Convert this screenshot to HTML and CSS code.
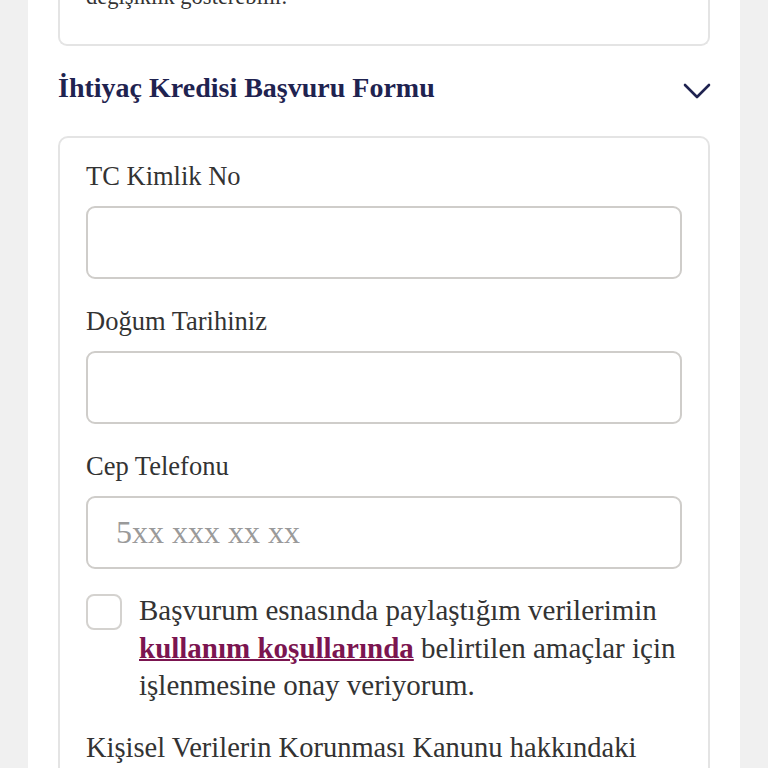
FILE: index.html
```html
<!DOCTYPE html>
<html lang="tr">
<head>
  <meta charset="UTF-8">
  <meta name="viewport" content="width=device-width, initial-scale=1.0">
  <title>İhtiyaç Kredisi Başvuru Formu</title>
  <link rel="stylesheet" href="styles.css">
</head>
<body>
  <div class="page">

    <div class="info-card">
      <p>Faiz oranları ve masraflar başvuru sonucuna göre<br>değişiklik gösterebilir.</p>
    </div>

    <!-- Accordion header -->
    <div class="accordion-head">
      <h2>İhtiyaç Kredisi Başvuru Formu</h2>
      <svg class="chevron" width="28" height="16" viewBox="0 0 28 16">
        <path d="M2 2 L14 14 L26 2" fill="none" stroke="#1f2350" stroke-width="2.6" stroke-linecap="round" stroke-linejoin="round"/>
      </svg>
    </div>

    <form class="form-card">
      <label for="tc">TC Kimlik No</label>
      <input type="text" id="tc">

      <label for="birth">Doğum Tarihiniz</label>
      <input type="text" id="birth">

      <label for="phone">Cep Telefonu</label>
      <input type="text" id="phone" placeholder="5xx xxx xx xx">

      <div class="consent">
        <span class="checkbox"></span>
        <p>Başvurum esnasında paylaştığım verilerimin <a href="#">kullanım koşullarında</a> belirtilen amaçlar için işlenmesine onay veriyorum.</p>
      </div>

      <p class="kvkk">Kişisel Verilerin Korunması Kanunu hakkındaki bilgilendirme metnini okudum.</p>
    </form>

  </div>
</body>
</html>
```

FILE: styles.css
```css
body {
  margin: 0;
  background-color: #f0f0f0;
  font-family: "Liberation Serif", "DejaVu Serif", serif;
  color: #333;
  height: 768px;
  overflow: hidden;
}

.page {
  margin: 0 28px;
  padding: 0 30px;
  background-color: white;
  min-height: 900px;
}

.info-card {
  margin-top: -60px;
  border: 2px solid #e4e4e4;
  border-top: none;
  border-radius: 0 0 9px 9px;
  padding: 0 26px 28px;
}

.info-card p {
  margin: 0;
  font-size: 22.5px;
  line-height: 38px;
}

/* Accordion header */
.accordion-head {
  display: flex;
  justify-content: space-between;
  align-items: center;
  height: 90px;
}

.accordion-head h2 {
  margin: 0;
  font-size: 28px;
  font-weight: bold;
  color: #1f2350;
  margin-top: -6px;
}

.chevron {
  margin-right: -1px;
}

.form-card {
  border: 2px solid #e4e4e4;
  border-radius: 10px;
  padding: 20px 26px 40px;
}

label {
  display: block;
  font-size: 26.5px;
  line-height: 36px;
  color: #333;
  margin-bottom: 12px;
}

input[type="text"] {
  display: block;
  box-sizing: border-box;
  width: 100%;
  height: 73px;
  border: 2px solid #cfcdca;
  border-radius: 9px;
  padding: 0 28px;
  font-family: "Liberation Serif", serif;
  font-size: 32px;
  color: #333;
  margin-bottom: 24px;
  outline: none;
}

input::placeholder {
  color: #9a9a9a;
}

.consent {
  display: flex;
  align-items: flex-start;
  gap: 17px;
  margin-top: 27px;
}

.checkbox {
  flex: none;
  width: 36px;
  height: 36px;
  box-sizing: border-box;
  border: 2px solid #d4d2cf;
  border-radius: 8px;
  margin-top: -2px;
}

.consent p {
  margin: 0;
  font-size: 29px;
  line-height: 37.5px;
  color: #333;
  margin-top: -4px;
}

.consent a {
  color: #7b1550;
  font-weight: bold;
  text-decoration: underline;
  text-decoration-thickness: 2px;
}

.kvkk {
  margin: 24px 0 0;
  font-size: 28.5px;
  line-height: 37.5px;
}
```
